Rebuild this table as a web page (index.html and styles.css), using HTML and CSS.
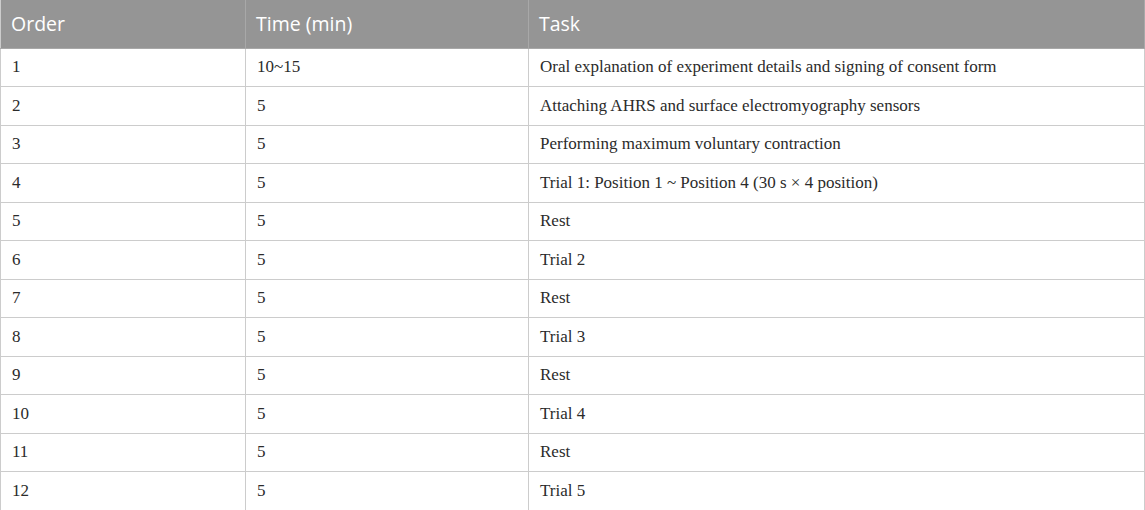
FILE: index.html
```html
<!DOCTYPE html>
<html>
<head>
<meta charset="utf-8">
<link rel="stylesheet" href="styles.css">
</head>
<body>
<table class="tbl">
<thead>
<tr><th class="c1">Order</th><th class="c2">Time (min)</th><th class="c3">Task</th></tr>
</thead>
<tbody>
<tr><td>1</td><td>10~15</td><td>Oral explanation of experiment details and signing of consent form</td></tr>
<tr><td>2</td><td>5</td><td>Attaching AHRS and surface electromyography sensors</td></tr>
<tr><td>3</td><td>5</td><td>Performing maximum voluntary contraction</td></tr>
<tr><td>4</td><td>5</td><td>Trial 1: Position 1 ~ Position 4 (30 s × 4 position)</td></tr>
<tr><td>5</td><td>5</td><td>Rest</td></tr>
<tr><td>6</td><td>5</td><td>Trial 2</td></tr>
<tr><td>7</td><td>5</td><td>Rest</td></tr>
<tr><td>8</td><td>5</td><td>Trial 3</td></tr>
<tr><td>9</td><td>5</td><td>Rest</td></tr>
<tr><td>10</td><td>5</td><td>Trial 4</td></tr>
<tr><td>11</td><td>5</td><td>Rest</td></tr>
<tr><td>12</td><td>5</td><td>Trial 5</td></tr>
</tbody>
</table>
</body>
</html>
```
FILE: styles.css
```css
html, body {
  margin: 0;
  padding: 0;
  background: #ffffff;
}
.tbl {
  width: 1145px;
  border-collapse: collapse;
  table-layout: fixed;
}
.tbl th {
  background: #959595;
  color: #ffffff;
  font-family: "Open Sans", "Noto Sans", sans-serif;
  font-weight: 400;
  font-size: 19.5px;
  text-align: left;
  height: 48px;
  padding: 0 10px;
  border: 1px solid #a8a8a8;
  border-top: none;
  box-sizing: border-box;
}
.tbl .c1 { width: 245px; }
.tbl .c2 { width: 283px; }
.tbl td {
  font-family: "Liberation Serif", "Times New Roman", serif;
  font-size: 17px;
  color: #2b2b2b;
  height: 38.5px;
  padding: 0 11px;
  border: 1px solid #cccccc;
  box-sizing: border-box;
}
.tbl td:first-child, .tbl th:first-child { border-left: 1px solid #cccccc; }
```
